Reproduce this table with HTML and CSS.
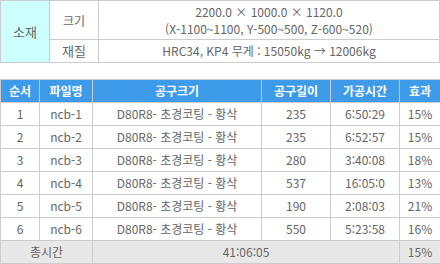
FILE: index.html
```html
<!DOCTYPE html>
<html lang="ko">
<head>
<meta charset="utf-8">
<link rel="stylesheet" href="styles.css">
</head>
<body>
<table class="spec">
  <colgroup><col class="c-a"><col class="c-b"><col></colgroup>
  <tr class="r-size">
    <th rowspan="2" class="mat">소재</th>
    <td>크기</td>
    <td>2200.0 × 1000.0 × 1120.0<br>(X-1100~1100, Y-500~500, Z-600~520)</td>
  </tr>
  <tr class="r-mat">
    <td>재질</td>
    <td>HRC34, KP4 무게 : 15050kg → 12006kg</td>
  </tr>
</table>
<table class="list">
  <colgroup>
    <col class="w1"><col class="w2"><col class="w3"><col class="w4"><col class="w5"><col class="w6">
  </colgroup>
  <thead>
    <tr><th>순서</th><th>파일명</th><th>공구크기</th><th>공구길이</th><th>가공시간</th><th>효과</th></tr>
  </thead>
  <tbody>
    <tr><td>1</td><td>ncb-1</td><td>D80R8- 초경코팅 - 황삭</td><td>235</td><td>6:50:29</td><td>15%</td></tr>
    <tr><td>2</td><td>ncb-2</td><td>D80R8- 초경코팅 - 황삭</td><td>235</td><td>6:52:57</td><td>15%</td></tr>
    <tr><td>3</td><td>ncb-3</td><td>D80R8- 초경코팅 - 황삭</td><td>280</td><td>3:40:08</td><td>18%</td></tr>
    <tr><td>4</td><td>ncb-4</td><td>D80R8- 초경코팅 - 황삭</td><td>537</td><td>16:05:0</td><td>13%</td></tr>
    <tr><td>5</td><td>ncb-5</td><td>D80R8- 초경코팅 - 황삭</td><td>190</td><td>2:08:03</td><td>21%</td></tr>
    <tr><td>6</td><td>ncb-6</td><td>D80R8- 초경코팅 - 황삭</td><td>550</td><td>5:23:58</td><td>16%</td></tr>
  </tbody>
  <tfoot>
    <tr><td colspan="2">총시간</td><td colspan="3">41:06:05</td><td>15%</td></tr>
  </tfoot>
</table>
</body>
</html>
```
FILE: styles.css
```css
html, body {
  margin: 0;
  padding: 0;
  background: #fff;
}
body {
  font-family: "Noto Sans CJK KR", "Noto Sans", sans-serif;
  font-size: 12px;
  color: #666;
}
table {
  border-collapse: collapse;
  width: 440px;
  table-layout: fixed;
}
td, th {
  border: 1px solid #cccccc;
  text-align: center;
  padding: 0;
  font-weight: normal;
}
.spec .c-a { width: 49px; }
.spec .c-b { width: 49px; }
.spec .mat {
  background: #ccffff;
  font-size: 13px;
  color: #666;
}
.spec .r-size td { height: 38px; line-height: 17px; }
.spec .r-mat td { height: 22px; line-height: 16px; }
.spec td:first-child { font-size: 13px; }
.list { margin-top: 16px; }
.list .w1 { width: 39px; }
.list .w2 { width: 53px; }
.list .w3 { width: 169px; }
.list .w4 { width: 69px; }
.list .w5 { width: 69px; }
.list .w6 { width: 41px; }
.list thead th {
  background: #3d9be9;
  color: #fff;
  font-weight: bold;
  font-size: 12px;
  height: 22px;
  line-height: 16px;
}
.list tbody td {
  height: 22px;
  line-height: 16px;
}
.list tfoot td {
  background: #e8e8e8;
  height: 22px;
  line-height: 16px;
}
```
